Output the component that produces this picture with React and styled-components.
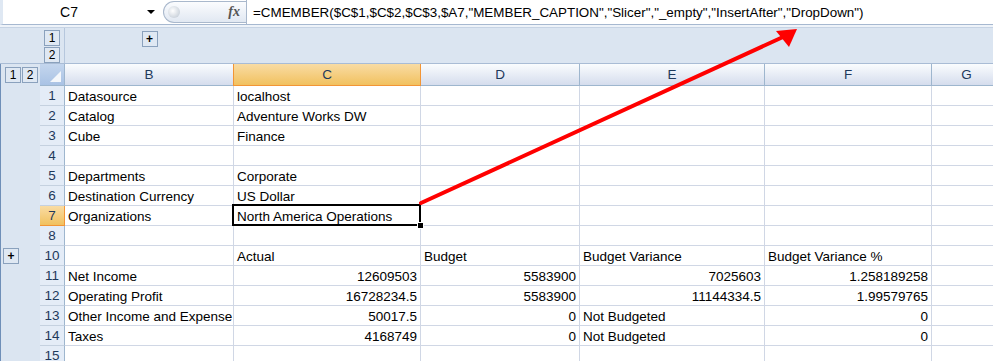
import styled, { createGlobalStyle } from 'styled-components';

const Global = createGlobalStyle`
body {
  margin: 0;
  background: #ffffff;
  font-family: "Liberation Sans", Arial, sans-serif;
}
`;

const COLS = [
  { key: 'B', width: 169 },
  { key: 'C', width: 187 },
  { key: 'D', width: 159 },
  { key: 'E', width: 185 },
  { key: 'F', width: 167 },
  { key: 'G', width: 70 },
];

const TEMPLATE = `25px ${COLS.map(c => c.width + 'px').join(' ')}`;

const ROWS = [
  { n: 1, cells: ['Datasource', 'localhost'] },
  { n: 2, cells: ['Catalog', 'Adventure Works DW'] },
  { n: 3, cells: ['Cube', 'Finance'] },
  { n: 4, cells: [] },
  { n: 5, cells: ['Departments', 'Corporate'] },
  { n: 6, cells: ['Destination Currency', 'US Dollar'] },
  { n: 7, cells: ['Organizations', 'North America Operations'] },
  { n: 8, cells: [] },
  { n: 10, cells: ['', 'Actual', 'Budget', 'Budget Variance', 'Budget Variance %'] },
  { n: 11, cells: ['Net Income', 12609503, 5583900, 7025603, 1.258189258] },
  { n: 12, cells: ['Operating Profit', 16728234.5, 5583900, 11144334.5, 1.99579765] },
  { n: 13, cells: ['Other Income and Expense', 50017.5, 0, 'Not Budgeted', 0] },
  { n: 14, cells: ['Taxes', 4168749, 0, 'Not Budgeted', 0] },
  { n: 15, cells: [] },
];

const Page = styled.div`
  position: relative;
  width: 993px;
  height: 361px;
  overflow: hidden;
  background: #ffffff;
`;

const FormulaBar = styled.div`
  display: flex;
  height: 24px;
  background: #ffffff;
  border-bottom: 1px solid #a6b8d0;
  border-left: 3px solid #dfe8f3;
`;

const NameBox = styled.div`
  width: 157px;
  display: flex;
  align-items: center;
  font-size: 14px;
  color: #000;
`;

const NameText = styled.span`
  flex: 1;
  text-align: center;
  padding-right: 12px;
`;

const DropArrow = styled.span`
  width: 0;
  height: 0;
  border-left: 4px solid transparent;
  border-right: 4px solid transparent;
  border-top: 4px solid #000;
  margin-right: 5px;
`;

const FxOval = styled.div`
  width: 83px;
  margin: 1px 0 1px 3px;
  border: 1px solid #a9b8cc;
  border-right: none;
  border-radius: 12px 0 0 12px;
  background: linear-gradient(#fbfcfe, #e1e8f2);
  display: flex;
  align-items: center;
  justify-content: space-between;
  padding: 0 6px 0 4px;
  box-sizing: border-box;
`;

const Knob = styled.span`
  width: 12px;
  height: 12px;
  border-radius: 50%;
  background: radial-gradient(circle at 40% 40%, #ffffff, #b9c3cf);
`;

const Fx = styled.span`
  font-family: "Liberation Serif", serif;
  font-style: italic;
  font-weight: bold;
  font-size: 14px;
  color: #555;
`;

const FormulaText = styled.div`
  flex: 1;
  border-left: 1px solid #a9b8cc;
  padding-left: 6px;
  display: flex;
  align-items: center;
  font-family: "Liberation Sans", Arial, sans-serif;
  font-size: 13.4px;
  white-space: nowrap;
  color: #000;
`;

const Gap = styled.div`
  height: 2px;
  background: #eef3f9;
  border-bottom: 1px solid #c6d3e4;
`;

const GroupBar = styled.div`
  display: grid;
  grid-template-columns: 40px ${TEMPLATE};
  height: 35px;
  background: #dbe5f1;
  border-bottom: 1px solid #a9bcd5;
`;

const LevelStack = styled.div`
  display: flex;
  flex-direction: column;
  align-items: center;
  gap: 1px;
  padding-top: 2px;
  border-right: 1px solid #b6c7dd;
`;

const OutlineButton = styled.div`
  width: 14px;
  height: 14px;
  border: 1px solid #8aa1bd;
  background: #dfe8f3;
  font-size: 12px;
  color: #000;
  display: flex;
  align-items: center;
  justify-content: center;
  font-weight: ${p => (p.$bold ? 'bold' : 'normal')};
  line-height: 1;
`;

const PlusCell = styled.div`
  display: flex;
  justify-content: center;
  padding-top: 3px;
`;

const Body = styled.div`
  display: flex;
`;

const Outline = styled.div`
  width: 39px;
  flex-shrink: 0;
  background: #dbe5f1;
  border-left: 1px solid #6f8fb8;
  display: flex;
  flex-direction: column;
  align-items: center;
  height: 300px;
`;

const OutlinePair = styled.div`
  height: 22px;
  display: flex;
  align-items: center;
  gap: 1px;
  margin-left: 2px;
`;

const OutlineSpacer = styled.div`
  height: 160px;
`;

const OutlineSlot = styled.div`
  height: 20px;
  display: flex;
  align-items: center;
  width: 100%;
  padding-left: 4px;
`;

const Sheet = styled.div`
  display: grid;
  grid-template-columns: ${TEMPLATE};
  grid-auto-rows: 20px;
  grid-template-rows: 22px;
  font-size: 13.5px;
  color: #000;
`;

const Corner = styled.div`
  background: linear-gradient(#c4d6ee, #a9c2e4);
  border-right: 1px solid #9eb6ce;
  border-bottom: 1px solid #9eb6ce;
  position: relative;
  &::after {
    content: '';
    position: absolute;
    right: 3px;
    bottom: 3px;
    border-left: 11px solid transparent;
    border-bottom: 11px solid #f4f7fb;
  }
`;

const ColHeader = styled.div`
  display: flex;
  align-items: center;
  justify-content: center;
  font-size: 13.5px;
  color: #1e395b;
  background: ${p =>
    p.$active ? 'linear-gradient(#f9dca4, #f1c15f)' : 'linear-gradient(#fafcfe, #d5dded)'};
  border-right: 1px solid ${p => (p.$active ? '#f29536' : '#9eb6ce')};
  border-left: ${p => (p.$active ? '1px solid #f29536' : 'none')};
  border-bottom: 1px solid ${p => (p.$active ? '#f29536' : '#9eb6ce')};
  margin-left: ${p => (p.$active ? '-1px' : '0')};
`;

const RowHeader = styled.div`
  display: flex;
  align-items: center;
  justify-content: center;
  font-size: 13.5px;
  color: #1e395b;
  background: ${p => (p.$active ? 'linear-gradient(#f9dca4, #f1c15f)' : '#e4ecf7')};
  border-right: 1px solid ${p => (p.$active ? '#f29536' : '#9eb6ce')};
  border-bottom: 1px solid ${p => (p.$active ? '#f29536' : '#c5d1e0')};
`;

const Cell = styled.div`
  position: relative;
  display: flex;
  align-items: center;
  justify-content: ${p => (p.$num ? 'flex-end' : 'flex-start')};
  padding: 1px 3px 0;
  white-space: nowrap;
  border-right: 1px solid #d0d7e5;
  border-bottom: 1px solid #d0d7e5;
  ${p =>
    p.$selected &&
    `
    &::after {
      content: '';
      position: absolute;
      left: -2px;
      top: -2px;
      right: -1px;
      bottom: -1px;
      border: 2px solid #000;
    }
    &::before {
      content: '';
      position: absolute;
      right: -4px;
      bottom: -4px;
      width: 5px;
      height: 5px;
      background: #000;
      border: 1px solid #fff;
      z-index: 2;
    }
  `}
`;

const Arrow = styled.svg`
  position: absolute;
  left: 0;
  top: 0;
  pointer-events: none;
`;

const App = () => {
  return (
    <Page>
      <Global />
      <FormulaBar>
        <NameBox>
          <NameText>C7</NameText>
          <DropArrow />
        </NameBox>
        <FxOval>
          <Knob />
          <Fx>fx</Fx>
        </FxOval>
        <FormulaText>
          =CMEMBER($C$1,$C$2,$C$3,$A7,"MEMBER_CAPTION","Slicer","_empty","InsertAfter","DropDown")
        </FormulaText>
      </FormulaBar>
      <Gap />
      <GroupBar>
        <div />
        <LevelStack>
          <OutlineButton>1</OutlineButton>
          <OutlineButton>2</OutlineButton>
        </LevelStack>
        <PlusCell>
          <OutlineButton $bold>+</OutlineButton>
        </PlusCell>
      </GroupBar>
      <Body>
        <Outline>
          <OutlinePair>
            <OutlineButton>1</OutlineButton>
            <OutlineButton>2</OutlineButton>
          </OutlinePair>
          <OutlineSpacer />
          <OutlineSlot>
            <OutlineButton $bold>+</OutlineButton>
          </OutlineSlot>
        </Outline>
        <Sheet>
          <Corner />
          {COLS.map(c => (
            <ColHeader key={c.key} $active={c.key === 'C'}>
              {c.key}
            </ColHeader>
          ))}
          {ROWS.map(r => [
            <RowHeader key={'h' + r.n} $active={r.n === 7}>
              {r.n}
            </RowHeader>,
            ...COLS.map((c, i) => {
              const v = r.cells[i];
              const num = typeof v === 'number';
              return (
                <Cell key={r.n + c.key} $num={num} $selected={r.n === 7 && c.key === 'C'}>
                  {v}
                </Cell>
              );
            }),
          ])}
        </Sheet>
      </Body>
      <Arrow width="993" height="361" viewBox="0 0 993 361">
        <line x1="421" y1="203" x2="783" y2="37" stroke="#ff0000" strokeWidth="4" strokeLinecap="round" />
        <polygon points="797,29 776,31 789,47" fill="#ff0000" />
      </Arrow>
    </Page>
  );
};

export default App;
